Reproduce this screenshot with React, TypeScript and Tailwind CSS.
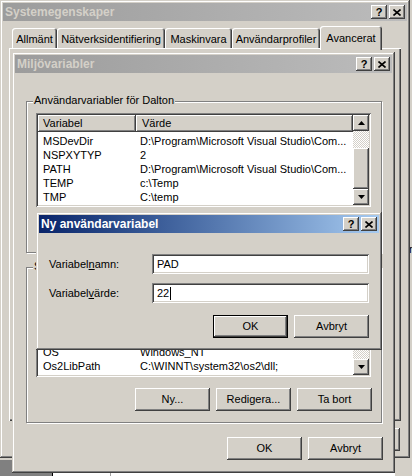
import React from "react";
import clsx from "clsx";

// Win2000 bevels
const windowFrame =
  "shadow-[inset_-1px_-1px_#404040,inset_1px_1px_#d4d0c8,inset_-2px_-2px_#808080,inset_2px_2px_#ffffff]";
const raised =
  "shadow-[inset_-1px_-1px_#404040,inset_1px_1px_#ffffff,inset_-2px_-2px_#808080,inset_2px_2px_#d4d0c8]";
const sunken =
  "shadow-[inset_1px_1px_#808080,inset_-1px_-1px_#ffffff,inset_2px_2px_#404040,inset_-2px_-2px_#d4d0c8]";
const hatch =
  "bg-[repeating-conic-gradient(#ffffff_0%_25%,#d4d0c8_0%_50%)] bg-size-[2px_2px]";

const CloseGlyph = () => (
  <svg width="8" height="7" viewBox="0 0 8 7">
    <path d="M0.5 0.5 L7.5 6.5 M7.5 0.5 L0.5 6.5" stroke="#000" strokeWidth="1.6" />
  </svg>
);

const Arrow = ({ up }: { up?: boolean }) => (
  <svg width="7" height="4" viewBox="0 0 7 4">
    <path d={up ? "M0 4 L3.5 0 L7 4z" : "M0 0 L3.5 4 L7 0z"} fill="#000" />
  </svg>
);

const CaptionButton = ({ children }: { children: React.ReactNode }) => (
  <div
    className={clsx(
      "flex h-[14px] w-[16px] items-center justify-center bg-[#d4d0c8] text-[11px] leading-none font-bold text-black",
      raised
    )}
  >
    {children}
  </div>
);

const TitleBar = ({ title, active }: { title: string; active?: boolean }) => (
  <div
    className={clsx(
      "flex h-[18px] shrink-0 items-center pl-[2px] pr-[2px]",
      active
        ? "bg-linear-to-r from-[#0a246a] to-[#a6caf0] text-white"
        : "bg-linear-to-r from-[#9c9c9c] to-[#bcbcbc] text-[#d4d0c8]"
    )}
  >
    <span className="flex-1 text-[12px] leading-none font-bold">{title}</span>
    <div className="flex gap-[2px]">
      <CaptionButton>?</CaptionButton>
      <CaptionButton>
        <CloseGlyph />
      </CaptionButton>
    </div>
  </div>
);

const Btn = ({ children, isDefault }: { children?: React.ReactNode; isDefault?: boolean }) => (
  <div
    className={clsx(
      "flex h-[23px] w-[75px] shrink-0 items-center justify-center bg-[#d4d0c8]",
      isDefault && "border border-black",
      raised
    )}
  >
    {children}
  </div>
);

const GroupBox = ({
  legend,
  className,
  children,
}: {
  legend: string;
  className?: string;
  children: React.ReactNode;
}) => (
  <div
    className={clsx(
      "relative flex w-[356px] flex-col border border-[#808080] px-[9px] pt-[11px] shadow-[inset_1px_1px_#ffffff,1px_1px_#ffffff]",
      className
    )}
  >
    <span className="absolute -top-[8px] left-[6px] bg-[#d4d0c8] px-[1px] leading-[13px]">{legend}</span>
    {children}
  </div>
);

type Row = [string, string];

const userRows: Row[] = [
  ["MSDevDir", "D:\\Program\\Microsoft Visual Studio\\Com..."],
  ["NSPXYTYP", "2"],
  ["PATH", "D:\\Program\\Microsoft Visual Studio\\Com..."],
  ["TEMP", "c:\\Temp"],
  ["TMP", "C:\\temp"],
];

// only the rows that show below the "Ny användarvariabel" dialog
const systemRows: Row[] = [
  ["OS", "Windows_NT"],
  ["Os2LibPath", "C:\\WINNT\\system32\\os2\\dll;"],
];

const ListRow = ({ row }: { row: Row }) => (
  <div className="flex h-[14px] shrink-0 items-center whitespace-nowrap">
    <span className="w-[98px] overflow-hidden pl-[5px]">{row[0]}</span>
    <span className="flex-1 overflow-hidden pl-[4px]">{row[1]}</span>
  </div>
);

const ListHeader = ({ blank }: { blank?: boolean }) => (
  <div className="flex h-[17px] shrink-0">
    <div className={clsx("flex w-[98px] items-center bg-[#d4d0c8] pl-[5px]", raised)}>{!blank && "Variabel"}</div>
    <div className={clsx("flex flex-1 items-center bg-[#d4d0c8] pl-[6px]", raised)}>{!blank && "Värde"}</div>
  </div>
);

const ScrollButton = ({ up }: { up?: boolean }) => (
  <div className={clsx("flex h-[16px] shrink-0 items-center justify-center bg-[#d4d0c8]", raised)}>
    <Arrow up={up} />
  </div>
);

export default function App() {
  return (
    <div className="relative h-[476px] w-[412px] overflow-hidden bg-[#d4d0c8] font-['Liberation_Sans',Arial,sans-serif] text-[11px] text-black">
      {/* desktop bits behind the dialogs */}
      <div className="absolute left-0 top-[460px] h-[16px] w-[52px] bg-[#808080]" />
      <div className="absolute left-[52px] top-[460px] h-[16px] w-[343px] border-l border-black bg-white" />
      <div className="absolute left-[110px] top-[460px] h-[16px] w-px bg-[#a0a0a0]" />
      <span className="absolute left-[409px] top-[241px]">r</span>

      {/* Systemegenskaper */}
      <div className={clsx("absolute left-0 top-0 flex h-[458px] w-[410px] flex-col bg-[#d4d0c8] p-[3px]", windowFrame)}>
        <TitleBar title="Systemegenskaper" />
        <div className="mt-[5px] flex h-[22px] items-end pl-[9px]">
          {[
            ["Allmänt", "w-[45px]"],
            ["Nätverksidentifiering", "w-[108px]"],
            ["Maskinvara", "w-[67px]"],
            ["Användarprofiler", "w-[88px]"],
          ].map(([label, w]) => (
            <div
              key={label}
              className={clsx(
                "flex h-[20px] items-center justify-center rounded-t-[3px] pt-[2px] shadow-[inset_1px_1px_#ffffff,inset_-1px_0_#404040,inset_-2px_0_#808080]",
                w
              )}
            >
              {label}
            </div>
          ))}
          <div className="relative z-10 -mb-[2px] flex h-[24px] w-[62px] items-center justify-center rounded-t-[3px] bg-[#d4d0c8] shadow-[inset_1px_1px_#ffffff,inset_-1px_0_#404040,inset_-2px_0_#808080]">
            Avancerat
          </div>
        </div>
        <div className="ml-[6px] h-[373px] w-[392px] shadow-[inset_1px_1px_#ffffff,inset_-1px_-1px_#404040,inset_-2px_-2px_#808080]" />
        {/* button row, covered by Miljövariabler except its right edge */}
        <div className="mt-[7px] flex justify-end gap-[6px] pr-[7px]">
          <Btn />
          <Btn />
          <Btn />
        </div>
      </div>

      {/* Miljövariabler */}
      <div className={clsx("absolute left-[12px] top-[52px] flex h-[421px] w-[383px] flex-col bg-[#d4d0c8] p-[3px]", windowFrame)}>
        <TitleBar title="Miljövariabler" />
        <div className="flex flex-col pl-[11px]">
          <GroupBox legend="Användarvariabler för Dalton" className="mt-[28px] h-[152px]">
            <div className={clsx("flex h-[94px] w-[335px] bg-white p-[2px]", sunken)}>
              <div className="flex min-w-0 flex-1 flex-col overflow-hidden">
                <ListHeader />
                <div className="flex flex-col pt-[2px]">
                  {userRows.map((r) => (
                    <ListRow key={r[0]} row={r} />
                  ))}
                </div>
              </div>
              <div className="flex w-[16px] flex-col">
                <ScrollButton up />
                <div className={clsx("h-[17px]", hatch)} />
                <div className={clsx("flex-1 bg-[#d4d0c8]", raised)} />
                <ScrollButton />
              </div>
            </div>
          </GroupBox>

          <GroupBox legend="Systemvariabler" className="mt-[14px] h-[156px]">
            <div className={clsx("flex h-[98px] w-[335px] bg-white p-[2px]", sunken)}>
              <div className="flex min-w-0 flex-1 flex-col overflow-hidden">
                <ListHeader blank />
                <div className="flex flex-1 flex-col justify-end overflow-hidden pb-[2px]">
                  {systemRows.map((r) => (
                    <ListRow key={r[0]} row={r} />
                  ))}
                </div>
              </div>
              <div className="flex w-[16px] flex-col">
                <ScrollButton up />
                <div className={clsx("h-[30px] bg-[#d4d0c8]", raised)} />
                <div className={clsx("flex-1", hatch)} />
                <ScrollButton />
              </div>
            </div>
            <div className="mt-[11px] flex justify-end gap-[6px]">
              <Btn>Ny...</Btn>
              <Btn>Redigera...</Btn>
              <Btn>Ta bort</Btn>
            </div>
          </GroupBox>

          <div className="mt-[14px] flex w-[357px] justify-end gap-[6px]">
            <Btn>OK</Btn>
            <Btn>Avbryt</Btn>
          </div>
        </div>
      </div>

      {/* Ny användarvariabel */}
      <div className={clsx("absolute left-[36px] top-[212px] flex h-[138px] w-[346px] flex-col bg-[#d4d0c8] p-[3px]", windowFrame)}>
        <TitleBar title="Ny användarvariabel" active />
        <div className="mt-[21px] grid grid-cols-[103px_217px] items-center gap-y-[9px] pl-[10px]">
          <span>
            Variabel<span className="underline">n</span>amn:
          </span>
          <div className={clsx("flex h-[20px] items-center bg-white pl-[5px]", sunken)}>PAD</div>
          <span>
            Variabel<span className="underline">v</span>ärde:
          </span>
          <div className={clsx("flex h-[20px] items-center bg-white pl-[5px]", sunken)}>
            22
            <span className="ml-[1px] h-[13px] w-px bg-black" />
          </div>
        </div>
        <div className="mt-[12px] flex justify-end gap-[6px] pr-[10px]">
          <Btn isDefault>OK</Btn>
          <Btn>Avbryt</Btn>
        </div>
      </div>
    </div>
  );
}
